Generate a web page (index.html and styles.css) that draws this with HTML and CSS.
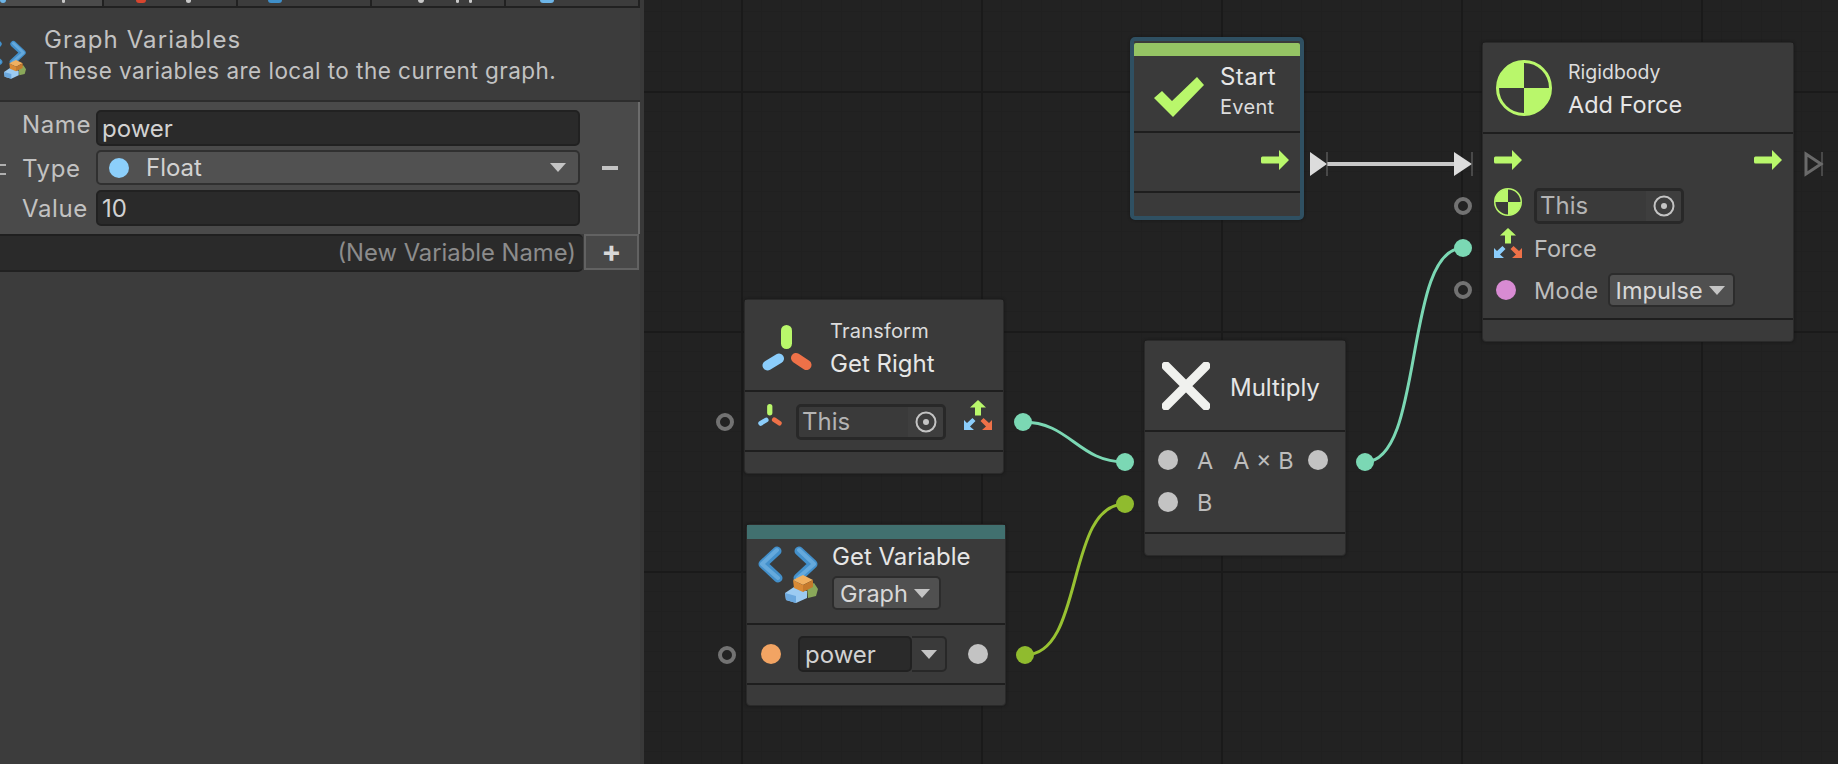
FILE: index.html
```html
<!DOCTYPE html>
<html lang="en">
<head>
    <meta charset="UTF-8">
    <title>Graph Variables</title>
    <link rel="stylesheet" href="styles.css">
</head>
<body>

<svg class="defs" width="0" height="0">
    <symbol id="i-arrow" viewBox="0 0 28 20">
        <path d="M1.5 6.5H18V0L28 10 18 20V13.5H1.5A1.5 1.5 0 0 1 0 12V8A1.5 1.5 0 0 1 1.5 6.5Z" fill="#b9f76b"/>
    </symbol>
    <symbol id="i-check" viewBox="0 0 50 40">
        <path d="M0 21 8 14 18 24 43 0 50 8 19 40Z" fill="#b9f76b"/>
    </symbol>
    <symbol id="i-rigidbody" viewBox="0 0 56 56">
        <circle cx="28" cy="28" r="26.5" fill="none" stroke="#b9f76b" stroke-width="3"/>
        <path d="M28 28V2A26 26 0 0 0 2 28Z M28 28V54A26 26 0 0 0 54 28Z" fill="#b9f76b"/>
    </symbol>
    <symbol id="i-transform" viewBox="0 0 50 46">
        <path d="M24.5 5.5V18.5" stroke="#b9f76b" stroke-width="11" stroke-linecap="round"/>
        <path d="M5.5 40.5 17 33.5" stroke="#8bcdfb" stroke-width="10" stroke-linecap="round"/>
        <path d="M34 33 44.5 40" stroke="#ee7148" stroke-width="10" stroke-linecap="round"/>
    </symbol>
    <symbol id="i-axes" viewBox="0 0 28 30">
        <path d="M14 0 22 7.5H17V15.5H11V7.5H6Z" fill="#b9f76b"/>
        <path d="M0 30V20L3 23 8.5 18 11.5 21 6 26.5 10 30Z" fill="#8bcdfb"/>
        <path d="M28 30V20L25 23 19.5 18 16.5 21 22 26.5 18 30Z" fill="#ee7148"/>
    </symbol>
    <symbol id="i-target" viewBox="0 0 22 22">
        <circle cx="11" cy="11" r="9.5" fill="none" stroke="#c4c4c4" stroke-width="2"/>
        <circle cx="11" cy="11" r="3" fill="#c4c4c4"/>
    </symbol>
    <symbol id="i-cross" viewBox="0 0 48 48">
        <path d="M4 4 44 44M44 4 4 44" stroke="#f0f1ee" stroke-width="9" stroke-linecap="round"/>
    </symbol>
    <symbol id="i-variable" viewBox="0 0 60 60">
        <path d="M19 6 5 19 20 33M41 6 55 19 40 33" fill="none" stroke="#4390cb" stroke-width="9" stroke-linecap="round" stroke-linejoin="round"/>
        <path d="M19 5 4 19 20 33M41 5 56 19 40 33" fill="none" stroke="#65a9dc" stroke-width="4" stroke-linecap="round" stroke-linejoin="round"/>
        <path d="M49 41 56 38 60 44 58 51 50 53Z" fill="#8aa85a"/>
        <path d="M27 48 36 42 49 46V53L38 58 28 55Z" fill="#9ccbf2"/>
        <path d="M27 48 38 51V58L28 55Z" fill="#6ba8de"/>
        <path d="M35 35 45 30 55 35 45 40Z" fill="#f0b060"/>
        <path d="M35 35 45 40V47L36 43Z" fill="#d98a35"/>
        <path d="M55 35V42L45 47V40Z" fill="#c57a2c"/>
    </symbol>
</svg>

<div class="panel">
    <div class="tabs">
        <div class="tab tab-active"><span class="bit bit-blue bit-a"></span><span class="bit bit-white bit-g"></span></div>
        <div class="tab"><span class="bit bit-red bit-b"></span><span class="bit bit-white bit-c"></span></div>
        <div class="tab"><span class="bit bit-globe bit-d"></span></div>
        <div class="tab"><span class="bit bit-white bit-e"></span><span class="bit bit-white bit-h"></span><span class="bit bit-white bit-i"></span></div>
        <div class="tab"><span class="bit bit-blue bit-f"></span></div>
    </div>

    <div class="panel-head">
        <svg class="panel-icon"><use href="#i-variable"/></svg>
        <div>
            <div class="panel-title">Graph Variables</div>
            <div class="panel-sub">These variables are local to the current graph.</div>
        </div>
    </div>

    <div class="var-item">
        <div class="handle"></div>
        <div class="var-fields">
            <label class="label-name">Name</label>
            <div class="field">power</div>
            <label>Type</label>
            <div class="dropdown">
                <span class="dot dot-blue"></span>
                <span class="dropdown-text">Float</span>
                <span class="caret"></span>
            </div>
            <label>Value</label>
            <div class="field">10</div>
        </div>
        <div class="minus"></div>
    </div>

    <div class="add-row">
        <div class="add-input">(New Variable Name)</div>
        <div class="add-btn">+</div>
    </div>
</div>

<div class="canvas">
    <svg class="wires" viewBox="644 0 1194 764" width="1194" height="764">
        <path class="wire wire-teal" d="M1023 422C1070 422 1078 462 1125 462"/>
        <path class="wire wire-green" d="M1025 655C1085 655 1065 504 1125 504"/>
        <path class="wire wire-teal" d="M1365 462C1425 462 1403 248 1463 248"/>

        <path class="flow" d="M1327 164H1454"/>
        <path class="tri" d="M1310 152 1327 164 1310 176Z"/>
        <path class="tri" d="M1454 152 1472 164 1454 176Z"/>
        <path class="tick" d="M1327 152V176M1472 152V176"/>
        <path class="tri-open" d="M1806 154 1821 164 1806 174Z"/>
        <path class="tick" d="M1822 152V176"/>

        <g class="ports">
            <circle class="port-open" cx="725" cy="422" r="7"/>
            <circle class="port-open" cx="727" cy="655" r="7"/>
            <circle class="port-open" cx="1463" cy="206" r="7"/>
            <circle class="port-open" cx="1463" cy="290" r="7"/>
            <circle class="port-teal" cx="1023" cy="422" r="9"/>
            <circle class="port-teal" cx="1125" cy="462" r="9"/>
            <circle class="port-teal" cx="1365" cy="462" r="9"/>
            <circle class="port-teal" cx="1463" cy="248" r="9"/>
            <circle class="port-green" cx="1125" cy="504" r="9"/>
            <circle class="port-green" cx="1025" cy="655" r="9"/>
        </g>
    </svg>

    <!-- Start -->
    <div class="node node-start">
        <div class="bar bar-green"></div>
        <div class="node-head">
            <svg class="icon-check"><use href="#i-check"/></svg>
            <div class="titles">
                <div class="title">Start</div>
                <div class="kind kind-low">Event</div>
            </div>
        </div>
        <div class="node-body">
            <div class="row row-end"><svg class="icon-arrow"><use href="#i-arrow"/></svg></div>
        </div>
        <div class="node-foot"></div>
    </div>

    <!-- Add Force -->
    <div class="node node-force">
        <div class="node-head">
            <svg class="icon-big"><use href="#i-rigidbody"/></svg>
            <div class="titles">
                <div class="kind">Rigidbody</div>
                <div class="title">Add Force</div>
            </div>
        </div>
        <div class="node-body">
            <div class="row row-flow">
                <svg class="icon-arrow"><use href="#i-arrow"/></svg>
                <svg class="icon-arrow"><use href="#i-arrow"/></svg>
            </div>
            <div class="row">
                <svg class="icon-small icon-raised"><use href="#i-rigidbody"/></svg>
                <div class="object"><span class="object-text">This</span><span class="object-pick"><svg class="icon-target"><use href="#i-target"/></svg></span></div>
            </div>
            <div class="row">
                <svg class="icon-small icon-axes icon-lifted"><use href="#i-axes"/></svg>
                <span class="label label-force">Force</span>
            </div>
            <div class="row">
                <span class="slot"><span class="dot dot-pink"></span></span>
                <span class="label label-mode">Mode</span>
                <div class="pick pick-mode"><span>Impulse</span><span class="caret"></span></div>
            </div>
        </div>
        <div class="node-foot"></div>
    </div>

    <!-- Get Right -->
    <div class="node node-right">
        <div class="node-head">
            <svg class="icon-transform"><use href="#i-transform"/></svg>
            <div class="titles">
                <div class="kind">Transform</div>
                <div class="title">Get Right</div>
            </div>
        </div>
        <div class="node-body">
            <div class="row">
                <svg class="icon-tiny"><use href="#i-transform"/></svg>
                <div class="object"><span class="object-text">This</span><span class="object-pick"><svg class="icon-target"><use href="#i-target"/></svg></span></div>
                <svg class="icon-small icon-axes icon-out"><use href="#i-axes"/></svg>
            </div>
        </div>
        <div class="node-foot"></div>
    </div>

    <!-- Get Variable -->
    <div class="node node-var">
        <div class="bar bar-teal"></div>
        <div class="node-head">
            <svg class="icon-variable"><use href="#i-variable"/></svg>
            <div class="titles">
                <div class="title">Get Variable</div>
                <div class="pick pick-graph"><span>Graph</span><span class="caret"></span></div>
            </div>
        </div>
        <div class="node-body">
            <div class="row">
                <span class="slot"><span class="dot dot-orange"></span></span>
                <div class="var-name"><span class="var-text">power</span><span class="var-arrow"><span class="caret"></span></span></div>
                <span class="dot dot-grey dot-out"></span>
            </div>
        </div>
        <div class="node-foot"></div>
    </div>

    <!-- Multiply -->
    <div class="node node-mult">
        <div class="node-head">
            <svg class="icon-cross"><use href="#i-cross"/></svg>
            <div class="titles">
                <div class="title">Multiply</div>
            </div>
        </div>
        <div class="node-body">
            <div class="row">
                <span class="dot dot-grey"></span>
                <span class="label label-port">A</span>
                <span class="label label-result">A × B</span>
                <span class="dot dot-grey dot-result"></span>
            </div>
            <div class="row">
                <span class="dot dot-grey"></span>
                <span class="label label-port">B</span>
            </div>
        </div>
        <div class="node-foot"></div>
    </div>
</div>

</body>
</html>
```

FILE: styles.css
```css
* {
    box-sizing: border-box;
}

body {
    margin: 0;
    width: 1838px;
    height: 764px;
    display: flex;
    overflow: hidden;
    background-color: #222;
    font-family: Inter, "Noto Sans", sans-serif;
}

.defs {
    position: absolute;
}

/* left panel */
.panel {
    width: 644px;
    flex-shrink: 0;
    border-right: 4px solid #393939;
    background-color: #3c3c3c;
    overflow: hidden;
}

.tabs {
    display: flex;
    height: 8px;
    border-bottom: 2px solid #212121;
}

.tab {
    position: relative;
    width: 134px;
    border-right: 2px solid #212121;
    overflow: hidden;
}

.tab-active {
    width: 104px;
    background-color: #4b4b4b;
}

.bit {
    position: absolute;
    top: 0;
    height: 3px;
    border-radius: 0 0 3px 3px;
}

.bit-blue { background-color: #6db5e8; }
.bit-red { background-color: #d8452e; }
.bit-white { background-color: #c8c8c8; }
.bit-globe { background-color: #3f8fc9; }
.bit-a { left: 0; width: 6px; }
.bit-b { left: 32px; width: 10px; }
.bit-c { left: 82px; width: 5px; }
.bit-d { left: 30px; width: 14px; }
.bit-e { left: 46px; width: 6px; }
.bit-f { left: 34px; width: 14px; }
.bit-g { left: 62px; width: 3px; }
.bit-h { left: 84px; width: 3px; }
.bit-i { left: 97px; width: 3px; }

.panel-head {
    display: flex;
    height: 94px;
    padding-top: 17px;
    border-bottom: 2px solid #2d2d2d;
}

.panel-icon {
    width: 40px;
    height: 40px;
    margin: 15px 18px 0 -14px;
    flex-shrink: 0;
    filter: blur(0.4px);
}

.panel-title {
    font-size: 24px;
    letter-spacing: 1.1px;
    line-height: 30px;
    color: #c2c2c2;
}

.panel-sub {
    font-size: 22.5px;
    letter-spacing: 0.47px;
    line-height: 31px;
    color: #c2c2c2;
}

.var-item {
    display: flex;
    height: 132px;
    padding-top: 8px;
    background-color: #4a4a4a;
    border-right: 2px solid #6c6c6c;
}

.handle {
    width: 23px;
    flex-shrink: 0;
}

.handle::before {
    content: "";
    display: block;
    width: 6px;
    height: 7px;
    margin-top: 54px;
    border-top: 2px solid #b0b0b0;
    border-bottom: 2px solid #b0b0b0;
}

.var-fields {
    display: grid;
    grid-template-columns: 73px 484px;
    grid-template-rows: 36px 36px 36px;
    row-gap: 4px;
    align-items: center;
}

label {
    margin-left: -1px;
    font-size: 24px;
    letter-spacing: 0.6px;
    color: #c2c2c2;
}

.label-name {
    margin-bottom: 8px;
}

.field {
    height: 36px;
    padding-left: 4px;
    font-size: 24px;
    line-height: 33px;
    color: #d2d2d2;
    background-color: #2a2a2a;
    border: 2px solid #212121;
    border-radius: 5px;
}

.dropdown {
    display: flex;
    align-items: center;
    align-self: start;
    height: 35px;
    padding: 0 12px 0 11px;
    font-size: 24px;
    color: #d2d2d2;
    background-color: #515151;
    border: 2px solid #303030;
    border-radius: 5px;
}

.dropdown-text {
    flex: 1;
    margin-left: 17px;
}

.minus {
    flex: 1;
}

.minus::before {
    content: "";
    display: block;
    width: 16px;
    height: 4px;
    margin: 56px 0 0 22px;
    background-color: #c4c4c4;
}

.add-row {
    display: flex;
    align-items: flex-start;
}

.add-input {
    width: 583px;
    height: 38px;
    padding-right: 7px;
    font-size: 23.8px;
    line-height: 34px;
    text-align: right;
    color: #8c8c8c;
    background-color: #2a2a2a;
    border-top: 2px solid #1f1f1f;
    border-bottom: 2px solid #212121;
    border-radius: 0 5px 5px 0;
}

.add-btn {
    width: 55px;
    height: 36px;
    margin-left: 1px;
    font-size: 30px;
    font-weight: 700;
    line-height: 30px;
    text-align: center;
    color: #d8d8d8;
    background-color: #484848;
    border: 2px solid #626262;
}

/* graph canvas */
.canvas {
    position: relative;
    flex: 1;
    height: 764px;
    background-color: #222;
    background-image:
        linear-gradient(90deg, #1a1a1a 2px, transparent 2px),
        linear-gradient(180deg, #1a1a1a 2px, transparent 2px),
        linear-gradient(90deg, #202020 1px, transparent 1px),
        linear-gradient(180deg, #202020 1px, transparent 1px);
    background-size: 240px 100%, 100% 240px, 20px 100%, 100% 20px;
    background-position: 97px 0, 0 91px, 17px 0, 0 11px;
}

.wires {
    position: absolute;
    left: 0;
    top: 0;
}

.wire {
    fill: none;
    stroke-width: 3px;
}

.wire-teal { stroke: #7bd8b4; }
.wire-green { stroke: #98c232; }

.flow {
    fill: none;
    stroke: #c8c8c8;
    stroke-width: 4px;
}

.tri {
    fill: #dcdcdc;
    filter: blur(0.5px);
}

.tri-open {
    fill: none;
    stroke: #6a6a6a;
    stroke-width: 3px;
}

.tick {
    fill: none;
    stroke: #707070;
    stroke-width: 1px;
}

.ports {
    filter: blur(0.5px);
}

.port-open {
    fill: #222;
    stroke: #727272;
    stroke-width: 4px;
}

.port-teal { fill: #7bd8b4; }
.port-green { fill: #90bb2e; }

/* nodes */
.node {
    position: absolute;
    display: flex;
    flex-direction: column;
    background-color: #3a3a3a;
    border: 1px solid #2a2a2a;
    border-radius: 4px;
    box-shadow: 0 0 3px #151515;
}

.bar {
    flex-shrink: 0;
}

.bar-green {
    height: 13px;
    background-color: #95c464;
    border-radius: 2px 2px 0 0;
}

.bar-teal {
    height: 14px;
    background-color: #41706f;
}

.node-head {
    display: flex;
    align-items: center;
    flex-shrink: 0;
    background-color: #3a3a3a;
}

.node-body {
    flex-shrink: 0;
    border-top: 2px solid #1e1e1e;
    border-bottom: 2px solid #1e1e1e;
}

.node-foot {
    flex: 1;
}

.row {
    display: flex;
    align-items: center;
    height: 36px;
}

.row-end {
    justify-content: flex-end;
    height: 54px;
    padding-right: 11px;
}

.row-flow {
    justify-content: space-between;
    padding-right: 11px;
    margin-bottom: 10px;
}

.titles {
    display: flex;
    flex-direction: column;
}

.title {
    font-size: 24px;
    line-height: 34px;
    color: #e6e6e6;
}

.kind {
    font-size: 20px;
    line-height: 30px;
    color: #dcdcdc;
}

.label {
    font-size: 23.5px;
    color: #bdbdbd;
}

.node-start {
    left: 486px;
    top: 37px;
    width: 174px;
    height: 183px;
    padding-top: 2px;
    border: 4px solid #2f5062;
    border-radius: 5px;
}

.node-start .node-head {
    height: 75px;
    padding-left: 20px;
}

.node-start .icon-check {
    margin-top: 6px;
}

.node-start .titles {
    margin: -5px 0 0 16px;
}

.node-start .title {
    letter-spacing: 0.4px;
}

.node-start .kind {
    letter-spacing: 0.3px;
}

.node-start .node-body {
    height: 62px;
}

.kind-low {
    margin-top: -2px;
}

.node-force {
    left: 838px;
    top: 42px;
    width: 312px;
    height: 300px;
}

.node-force .node-head {
    height: 89px;
    padding-left: 13px;
}

.node-force .titles {
    margin: 4px 0 0 16px;
}

.node-force .title {
    margin-top: 1px;
    font-size: 23.5px;
}

.node-force .kind {
    font-size: 19.5px;
}

.node-force .node-body {
    height: 188px;
    padding: 8px 0 0 11px;
}

.node-force .row + .row + .row {
    margin-top: 6px;
}

.node-right {
    left: 100px;
    top: 299px;
    width: 260px;
    height: 175px;
}

.node-right .node-head {
    height: 90px;
    padding-left: 17px;
}

.node-right .titles {
    margin: 6px 0 0 18px;
}

.node-right .title {
    margin-top: 1px;
}

.node-right .kind {
    letter-spacing: 0.2px;
}

.node-right .node-body {
    height: 62px;
    padding: 12px 0 0 12px;
}

.node-var {
    left: 102px;
    top: 524px;
    width: 260px;
    height: 182px;
}

.node-var .node-head {
    height: 84px;
    padding-left: 11px;
    align-items: flex-start;
}

.node-var .titles {
    margin: 1px 0 0 14px;
}

.node-var .node-body {
    height: 62px;
    padding: 11px 0 0 12px;
}

.node-mult {
    left: 500px;
    top: 340px;
    width: 202px;
    height: 216px;
}

.node-mult .node-head {
    height: 89px;
    padding-left: 17px;
}

.node-mult .titles {
    margin: 5px 0 0 20px;
}

.node-mult .node-body {
    height: 104px;
    padding: 10px 0 0 13px;
}

.node-mult .row + .row {
    margin-top: 6px;
}

/* icons */
.icon-arrow {
    width: 28px;
    height: 20px;
    flex-shrink: 0;
}

.icon-check {
    width: 50px;
    height: 40px;
}

.icon-big {
    width: 56px;
    height: 56px;
}

.icon-transform {
    width: 50px;
    height: 46px;
    margin-top: 6px;
}

.icon-variable {
    width: 60px;
    height: 60px;
    margin-top: 6px;
    flex-shrink: 0;
    filter: blur(0.4px);
}

.icon-cross {
    width: 48px;
    height: 48px;
}

.icon-small {
    width: 28px;
    height: 28px;
    flex-shrink: 0;
}

.icon-axes {
    height: 30px;
}

.icon-raised {
    margin-bottom: 8px;
}

.icon-lifted {
    margin-bottom: 10px;
}

.icon-tiny {
    width: 26px;
    height: 22px;
    margin-bottom: 14px;
    flex-shrink: 0;
}

.icon-out {
    margin: 0 0 14px 18px;
}

.icon-target {
    width: 22px;
    height: 22px;
    display: block;
}

.dot {
    display: inline-block;
    width: 20px;
    height: 20px;
    border-radius: 50%;
    flex-shrink: 0;
}

.dot-blue { background-color: #8ccffb; }
.dot-pink { background-color: #d88bd3; }
.dot-orange { background-color: #f2a463; }
.dot-grey { background-color: #c3c3c3; }

.slot {
    display: flex;
    justify-content: center;
    width: 24px;
}

.caret {
    display: inline-block;
    width: 0;
    height: 0;
    border-left: 8px solid transparent;
    border-right: 8px solid transparent;
    border-top: 9px solid #c4c4c4;
}

/* inline controls */
.object {
    display: flex;
    width: 150px;
    height: 36px;
    margin-left: 12px;
    border: 3px solid #282828;
    border-radius: 5px;
    overflow: hidden;
}

.node-right .object {
    margin-left: 13px;
}

.object-text {
    flex: 1;
    padding-left: 3px;
    font-size: 24px;
    line-height: 29px;
    color: #b4b4b4;
    background-color: #3a3a3a;
}

.object-pick {
    display: flex;
    align-items: center;
    justify-content: center;
    width: 35px;
    background-color: #3e3e3e;
}

.pick {
    display: inline-flex;
    align-items: center;
    height: 34px;
    font-size: 23.5px;
    color: #d8d8d8;
    background-color: #505050;
    border: 2px solid #2c2c2c;
    border-radius: 5px;
}

.pick .caret {
    margin-left: 6px;
}

.pick-mode {
    width: 127px;
    margin-left: 9px;
    padding-left: 6px;
}

.pick-graph {
    width: 109px;
    padding-left: 6px;
    margin-top: 2px;
}

.var-name {
    display: flex;
    height: 36px;
    margin-left: 15px;
    color: #d2d2d2;
}

.var-text {
    width: 114px;
    padding-left: 5px;
    font-size: 24px;
    line-height: 34px;
    background-color: #2a2a2a;
    border: 2px solid #212121;
    border-radius: 5px;
}

.var-arrow {
    display: flex;
    align-items: center;
    justify-content: center;
    width: 35px;
    border: 2px solid #282828;
    border-left: none;
    border-radius: 0 5px 5px 0;
}

.dot-out {
    margin-left: 21px;
}

.label-force {
    margin-left: 12px;
}

.label-mode {
    margin-left: 16px;
    letter-spacing: 0.3px;
}

.label-port {
    margin-left: 19px;
}

.label-result {
    width: 75px;
    margin-left: 20px;
}

.dot-result {
    margin-left: 0;
}
```
